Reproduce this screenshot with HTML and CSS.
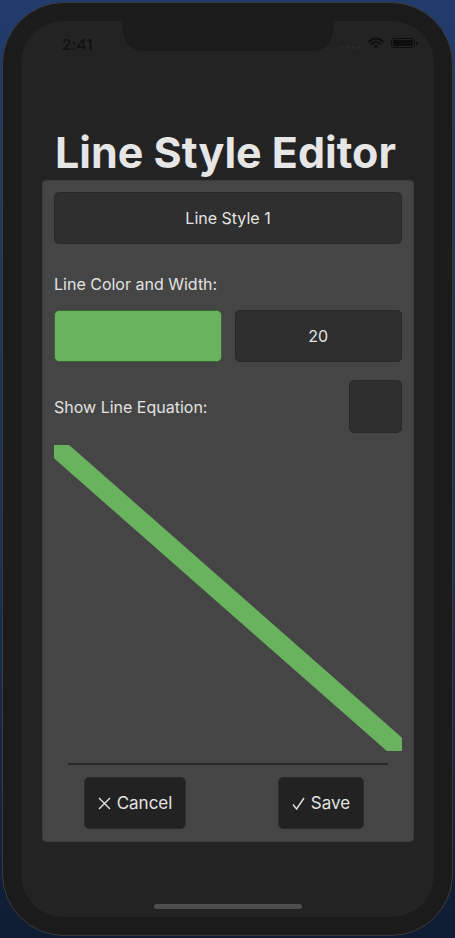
FILE: index.html
```html
<!DOCTYPE html>
<html lang="en">
<head>
<meta charset="utf-8">
<title>Line Style Editor</title>
<link rel="stylesheet" href="styles.css">
</head>
<body>
<div class="phone">
  <div class="screen">
    <div class="notch"></div>
    <div class="status">
      <span class="time">2:41</span>
      <div class="status-right">
        <span class="dots"><i></i><i></i><i></i><i></i></span>
        <svg class="wifi" width="16" height="12" viewBox="0 0 16 12">
          <path d="M8 11.5 L5.6 9 A3.4 3.4 0 0 1 10.4 9 Z" fill="#0e0e0e"/>
          <path d="M3.6 7 A6.2 6.2 0 0 1 12.4 7" fill="none" stroke="#0e0e0e" stroke-width="1.9" stroke-linecap="round"/>
          <path d="M1.2 4.4 A9.6 9.6 0 0 1 14.8 4.4" fill="none" stroke="#0e0e0e" stroke-width="1.9" stroke-linecap="round"/>
        </svg>
        <span class="battery"><span class="battery-fill"></span></span>
      </div>
    </div>

    <h1 class="title">Line Style Editor</h1>

    <div class="card">
      <div class="field name-field">Line Style 1</div>

      <div class="label label-first">Line Color and Width:</div>
      <div class="pair">
        <div class="swatch"></div>
        <div class="field">20</div>
      </div>

      <div class="check-row">
        <span class="label">Show Line Equation:</span>
        <span class="checkbox"></span>
      </div>

      <div class="preview">
        <svg width="348" height="306" viewBox="0 0 348 306">
          <line x1="0" y1="0" x2="348" y2="306" stroke="#69b35f" stroke-width="20"/>
        </svg>
      </div>

      <div class="divider"></div>

      <div class="actions">
        <button class="btn btn-cancel">
          <svg class="icon" width="13" height="13" viewBox="0 0 13 13"><path d="M1 1 L12 12 M12 1 L1 12" stroke="#e4e4e4" stroke-width="1.4" fill="none"/></svg>
          <span>Cancel</span>
        </button>
        <button class="btn btn-save">
          <svg class="icon" width="13" height="13" viewBox="0 0 13 13"><path d="M1 7.5 L4.6 12 L12 1" stroke="#e4e4e4" stroke-width="1.4" fill="none"/></svg>
          <span>Save</span>
        </button>
      </div>
    </div>

    <div class="home-indicator"></div>
  </div>
</div>
</body>
</html>
```
FILE: styles.css
```css
* { box-sizing: border-box; }

html, body {
  margin: 0;
  padding: 0;
}

body {
  width: 455px;
  height: 938px;
  background: linear-gradient(180deg, #213c6b 0%, #1a3056 60%, #0f1d33 100%);
  padding: 2px;
  font-family: Inter, "Noto Sans", "Liberation Sans", sans-serif;
  overflow: hidden;
}

.phone {
  width: 451px;
  height: 934px;
  border-radius: 62px;
  background: #1b1b1b;
  border: 1px solid #3b3b3b;
  padding: 18px 18px 18px 18px;
}

.screen {
  position: relative;
  width: 413px;
  height: 896px;
  border-radius: 42px;
  background: #232323;
  overflow: hidden;
  padding-top: 109px;
}

.notch {
  position: absolute;
  top: 0;
  left: 102px;
  width: 210px;
  height: 30px;
  background: #1b1b1b;
  border-radius: 0 0 20px 20px;
}

.status {
  position: absolute;
  top: 0;
  left: 0;
  right: 0;
  height: 44px;
}

.time {
  position: absolute;
  left: 41px;
  top: 14px;
  font-size: 15px;
  font-weight: 600;
  color: #121212;
  letter-spacing: 0.2px;
}

.status-right {
  position: absolute;
  left: 319px;
  top: 16px;
  display: flex;
  align-items: center;
  gap: 7px;
}

.dots {
  display: flex;
  gap: 3px;
  margin-top: 8px;
}

.dots i {
  display: block;
  width: 3px;
  height: 3px;
  border-radius: 50%;
  background: #2c2c2c;
}

.wifi { display: block; }

.battery {
  position: relative;
  width: 24px;
  height: 10px;
  border: 1.5px solid #0e0e0e;
  border-radius: 3px;
  padding: 1px;
}

.battery::after {
  content: "";
  position: absolute;
  right: -3.5px;
  top: 2.5px;
  width: 1.5px;
  height: 3px;
  background: #0e0e0e;
  border-radius: 0 1px 1px 0;
}

.battery-fill {
  display: block;
  width: 100%;
  height: 100%;
  background: #0e0e0e;
  border-radius: 1px;
}

.title {
  margin: 0;
  text-align: center;
  font-size: 43px;
  line-height: 44px;
  font-weight: 700;
  color: #e6e6e6;
  letter-spacing: 0;
  padding-right: 4px;
}

.card {
  margin: 6px 20px 0 21px;
  background: #454545;
  border: 1px solid #3d3d3d;
  border-radius: 4px;
  padding: 11px 11px 12px 11px;
  display: flex;
  flex-direction: column;
}

.field {
  height: 52px;
  background: #2f2f2f;
  border: 1px solid #282828;
  border-radius: 5px;
  display: flex;
  align-items: center;
  justify-content: center;
  color: #e4e4e4;
  font-size: 16px;
}

.label {
  color: #e2e2e2;
  font-size: 16px;
  line-height: 20px;
}

.label-first {
  margin-top: 30px;
}

.pair {
  margin-top: 16px;
  display: grid;
  grid-template-columns: 1fr 1fr;
  gap: 13px;
}

.swatch {
  height: 52px;
  background: #69b35f;
  border: 1px solid #3a6535;
  border-radius: 5px;
}

.check-row {
  margin-top: 18px;
  display: flex;
  align-items: center;
  justify-content: space-between;
  height: 53px;
}

.checkbox {
  width: 53px;
  height: 53px;
  background: #2f2f2f;
  border: 1px solid #282828;
  border-radius: 5px;
}

.preview {
  margin-top: 12px;
  height: 306px;
  overflow: hidden;
}

.preview svg { display: block; }

.divider {
  margin: 12px 14px 0 14px;
  height: 2px;
  background: #2a2a2a;
}

.actions {
  margin-top: 12px;
  display: flex;
  justify-content: space-between;
  padding: 0 38px 0 30px;
}

.btn {
  height: 52px;
  background: #222222;
  border: 1px solid #2c2c2c;
  border-radius: 5px;
  color: #e4e4e4;
  font-family: inherit;
  font-size: 17px;
  padding: 0;
  white-space: nowrap;
  display: flex;
  align-items: center;
  justify-content: center;
  gap: 6px;
}

.icon {
  display: block;
  margin-top: 1px;
}

.btn-cancel { width: 102px; }
.btn-save { width: 86px; }

.home-indicator {
  position: absolute;
  left: 133px;
  bottom: 8px;
  width: 148px;
  height: 5px;
  border-radius: 3px;
  background: #4d4d4d;
}
```
